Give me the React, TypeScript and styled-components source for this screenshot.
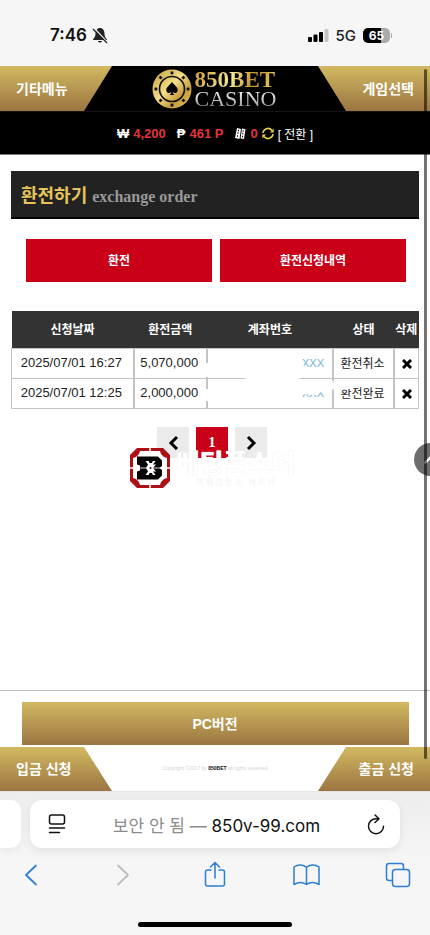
import React from "react";
import styled, { createGlobalStyle } from "styled-components";

const gold = "linear-gradient(#d2b961, #9b7541)";
const korean = '"Liberation Sans", "Noto Sans CJK KR", sans-serif';
const system = 'Inter, "Noto Sans CJK KR", sans-serif';

const Global = createGlobalStyle`
  *, *::before, *::after { box-sizing: border-box; }
  body { margin: 0; background: #fff; font-family: ${korean}; }
  button { font: inherit; border: 0; padding: 0; background: none; cursor: pointer; }
  a { text-decoration: none; color: inherit; }
  svg { display: block; flex: none; }
`;

const Screen = styled.div`
  position: relative;
  display: flex;
  flex-direction: column;
  min-height: 100vh;
  overflow: hidden;
`;

const StatusBar = styled.header`
  display: flex;
  align-items: center;
  justify-content: space-between;
  height: 66px;
  padding: 4px 38px 0 50px;
  background: #f6f6f6;
  font-family: ${system};
`;

const StatusGroup = styled.div<{ $gap: number }>`
  display: flex;
  align-items: center;
  gap: ${(p) => p.$gap}px;
`;

const Clock = styled.time`
  font-size: 17px;
  font-weight: 600;
  color: #111;
`;

const Network = styled.span`
  font-size: 15px;
  font-weight: 500;
  color: #222;
`;

const BatteryGroup = styled.span`
  display: flex;
  align-items: center;
  gap: 1px;
`;

const Battery = styled.span`
  width: 27px;
  height: 15px;
  border-radius: 5px;
  background: linear-gradient(90deg, #000 66%, #aaa 66%);
  color: #fff;
  font-size: 12px;
  font-weight: 700;
  line-height: 15px;
  text-align: center;
`;

const BatteryTip = styled.span`
  width: 1px;
  height: 5px;
  background: #aaa;
`;

const SiteHeader = styled.div`
  display: flex;
  justify-content: space-between;
  height: 46px;
  background: #000;
  border-bottom: 1px solid #151515;
`;

const corners = {
  topLeft: "polygon(0 0, 100% 0, 75% 100%, 0 100%)",
  topRight: "polygon(0 0, 100% 0, 100% 100%, 25% 100%)",
  bottomLeft: "polygon(0 0, 75% 0, 100% 100%, 0 100%)",
  bottomRight: "polygon(25% 0, 100% 0, 100% 100%, 0 100%)",
};

const CornerButton = styled.button<{ $corner: keyof typeof corners }>`
  width: 112px;
  padding: 0 16px 2px;
  background: ${gold};
  clip-path: ${(p) => corners[p.$corner]};
  color: #fff;
  font-size: 14px;
  font-weight: 700;
  white-space: nowrap;
  text-align: ${(p) => (p.$corner.endsWith("Left") ? "left" : "right")};
`;

const Logo = styled.a`
  display: flex;
  align-items: center;
  gap: 3px;
  padding-right: 2px;
  font-family: "Liberation Serif", serif;
`;

const LogoText = styled.span`
  display: flex;
  flex-direction: column;
`;

const LogoLine = styled.span<{ $silver?: boolean }>`
  font-size: ${(p) => (p.$silver ? 22 : 23)}px;
  font-weight: ${(p) => (p.$silver ? 400 : 700)};
  line-height: 19px;
  background: ${(p) =>
    p.$silver ? "linear-gradient(#fff, #999)" : "linear-gradient(110deg, #c99d38, #f7e891 45%, #c08f2b 70%, #ecd46c)"};
  background-clip: text;
  color: transparent;
`;

const Balances = styled.div`
  display: flex;
  align-items: center;
  justify-content: center;
  height: 43px;
  background: #000;
  border-bottom: 1px solid #777;
  color: #fff;
  font-size: 13px;
  gap: 11px;
`;

const Balance = styled.span`
  display: flex;
  align-items: center;
  gap: 4px;
  font-weight: 700;
  white-space: nowrap;
`;

const Amount = styled.span`
  color: #e5343b;
`;

const Transfer = styled.button`
  color: #fff;
  font-size: 12px;
  font-weight: 400;
`;

const Refresh = styled.button`
  display: flex;
`;

const Main = styled.main`
  flex: 1;
  padding: 16px 11px 0;
`;

const Title = styled.h1`
  display: flex;
  align-items: center;
  gap: 5px;
  height: 48px;
  margin: 0;
  padding: 0 10px;
  background: #222;
  border-bottom: 2px solid #000;
  color: #e5c45c;
  font-size: 18px;
  font-weight: 700;
`;

const Subtitle = styled.small`
  padding-top: 5px;
  color: #999;
  font-family: "Liberation Serif", serif;
  font-size: 16px;
`;

const Tabs = styled.nav`
  display: grid;
  grid-template-columns: 1fr 1fr;
  gap: 8px;
  margin: 20px 13px 29px 15px;
`;

const Tab = styled.button`
  height: 43px;
  padding-bottom: 2px;
  background: #ca0019;
  color: #fff;
  font-size: 12px;
  font-weight: 700;
`;

const TableArea = styled.div`
  position: relative;
`;

const Table = styled.table`
  width: 100%;
  table-layout: fixed;
  border-collapse: collapse;
  color: #222;
  font-size: 12px;
`;

const Column = styled.col<{ $share: number }>`
  width: ${(p) => p.$share}%;
`;

const Th = styled.th`
  height: 37px;
  padding: 0 0 2px;
  background: #333;
  color: #fff;
  font-weight: 700;
  white-space: nowrap;
`;

const Td = styled.td<{ $masked?: boolean; $figures?: boolean }>`
  height: 30px;
  padding: ${(p) => (p.$masked ? "0 8px 0 0" : "0 2px 1px 0")};
  border: 1px solid #c4c4c4;
  border-width: 1px 2px;
  text-align: ${(p) => (p.$masked ? "right" : "center")};
  color: ${(p) => (p.$masked ? "#6fb4d8" : "inherit")};
  font-size: ${(p) => (p.$figures ? 13 : p.$masked ? 11 : 12)}px;
  white-space: nowrap;
  &:first-child { border-left-width: 1px; }
  &:last-child { border-right-width: 1px; padding-right: 0; }
`;

const Delete = styled.button`
  display: block;
  margin: 2px auto 0;
`;

const Brush = styled.svg`
  position: absolute;
  left: 46%;
  bottom: 0;
  width: 42%;
  height: 61px;
  pointer-events: none;
`;

const Pager = styled.nav`
  position: relative;
  display: flex;
  justify-content: center;
  gap: 7px;
  margin: 18px 6px 0 0;
`;

const PageLink = styled.a<{ $current?: boolean }>`
  display: flex;
  align-items: center;
  justify-content: center;
  width: 32px;
  height: 31px;
  background: ${(p) => (p.$current ? "#ca0019" : "#ebebeb")};
  color: #fff;
  font-family: "Liberation Serif", serif;
  font-size: 15px;
  font-weight: 700;
  line-height: 16px;
`;

const Watermark = styled.div`
  position: absolute;
  top: 20px;
  left: 0;
  right: 0;
  display: flex;
  align-items: center;
  justify-content: center;
  gap: 5px;
  color: #fff;
  white-space: nowrap;
  pointer-events: none;
`;

const WatermarkText = styled.div`
  display: flex;
  flex-direction: column;
  align-items: center;
  padding-top: 4px;
`;

const WatermarkName = styled.strong`
  font-size: 26px;
  font-weight: 900;
  line-height: 26px;
  text-shadow: 0 0 1px #e4e4e4;
`;

const WatermarkNote = styled.span`
  font-size: 8px;
  line-height: 12px;
  text-shadow: 0 0 1px #ddd;
`;

const Footer = styled.footer`
  border-top: 1px solid #bbb;
  padding-top: 11px;
`;

const PcButton = styled.button`
  display: block;
  width: calc(100% - 43px);
  height: 43px;
  margin: 0 auto 2px;
  padding-bottom: 2px;
  background: ${gold};
  color: #fff;
  font-size: 14px;
  font-weight: 700;
`;

const FooterBar = styled.div`
  display: flex;
  align-items: stretch;
  justify-content: space-between;
  height: 44px;
`;

const Copyright = styled.p`
  align-self: center;
  margin: 0 0 3px;
  color: #d4d4d4;
  font-size: 5px;
  white-space: nowrap;
`;

const Brand = styled.strong`
  color: #111;
`;

const Browser = styled.section`
  height: 144px;
  padding-top: 8px;
  border-top: 1px solid #e4e4e4;
  background: linear-gradient(#ededed, #f6f6f6 50%);
  font-family: ${system};
`;

const AddressRow = styled.div`
  display: flex;
  gap: 9px;
  padding-right: 30px;
`;

const NextTab = styled.div`
  width: 21px;
  border-radius: 0 10px 10px 0;
  background: #fff;
  box-shadow: 0 3px 8px #0000000d;
`;

const Address = styled.div`
  flex: 1;
  display: flex;
  align-items: center;
  justify-content: space-between;
  height: 48px;
  padding: 0 15px 0 18px;
  border-radius: 12px;
  background: #fff;
  box-shadow: 0 3px 10px #00000014;
`;

const Url = styled.span`
  color: #8c8c8c;
  font-size: 17px;
  white-space: nowrap;
`;

const Host = styled.span`
  color: #111;
`;

const IconButton = styled.button`
  display: flex;
`;

const Toolbar = styled.nav`
  display: flex;
  justify-content: space-between;
  height: 53px;
  padding: 0 17px 0 16px;
`;

const ToolButton = styled.button`
  display: flex;
  align-items: center;
  justify-content: center;
  width: 30px;
`;

const HomeBar = styled.div`
  width: 154px;
  height: 5px;
  margin: 21px auto 0;
  border-radius: 3px;
  background: #000;
`;

const ScrollThumb = styled.div`
  position: absolute;
  top: 69px;
  right: 3px;
  bottom: 176px;
  width: 3px;
  border-radius: 2px;
  background: #0000008c;
`;

const TopButton = styled.button`
  position: absolute;
  top: 443px;
  right: -17px;
  display: flex;
  align-items: center;
  justify-content: center;
  width: 33px;
  height: 33px;
  border-radius: 50%;
  background: #555d;
`;

function Chip() {
  return (
    <svg width="40" height="40" viewBox="0 0 40 40" aria-hidden="true">
      <defs>
        <linearGradient id="chip" x1="0" y1="0" x2="1" y2="1">
          <stop offset="0" stopColor="#c49a3a" />
          <stop offset=".45" stopColor="#f3df87" />
          <stop offset=".7" stopColor="#c79c3b" />
          <stop offset="1" stopColor="#e6c861" />
        </linearGradient>
      </defs>
      <circle cx="20" cy="20" r="19.5" fill="url(#chip)" />
      {[0, 45, 90, 135, 180, 225, 270, 315].map((a) => (
        <rect key={a} x="18.6" y="2.5" width="2.8" height="2.8" fill="#111" transform={`rotate(${a} 20 20)`} />
      ))}
      <circle cx="20" cy="20" r="12.5" fill="none" stroke="#111" strokeWidth="1.6" />
      <path d="M20 13c-2 3-5.800 4.800-5.800 8.100 0 3 3.400 3.800 5.100 1.700-.2 1.800-.9 2.600-1.900 3.200h5.200c-1-.6-1.700-1.400-1.900-3.200 1.700 2.100 5.100 1.300 5.100-1.700C25.800 17.800 22 16 20 13z" fill="#080808" />
    </svg>
  );
}

function Badge() {
  return (
    <svg width="42" height="42" viewBox="0 0 42 42" aria-hidden="true">
      <path d="M8 1h26l7 7v26l-7 7H8l-7-7V8z" fill="#ad1117" />
      <path d="M11 4h20l1 3 3 3 3 1v20l-3 1-3 3-1 3H11l-1-3-3-3-3-1V11l3-1 3-3z" fill="#fff" />
      <path d="M21 0v8M21 34v8M0 21h6M36 21h6" stroke="#fff" strokeWidth="1.5" />
      <path d="M8 9.500h21l4 4V19l-2.500 2 2.500 2v5.500l-4 4H8V24.500l3-1v-5l-3-1z" fill="#050505" />
      <path d="M16.500 14h10l-2.500 3.500h3l-3 3.500 3 3.500h-3l2.500 3.500h-10l2.500-3.500-2-3.500 2-3.500z" fill="#fff" />
      <path d="M19.500 13.500h4.500l-1 2.500h-2.500zM19.500 28.500h4.500l-1-2.500h-2.500z" fill="#050505" />
      <path d="M5 21h32" stroke="#fff" strokeWidth=".8" />
      <circle cx="21.500" cy="21" r="1" fill="#500" />
    </svg>
  );
}

function Chevron({ left, color }: { left?: boolean; color: string }) {
  return (
    <svg width="24" height="24" viewBox="0 0 24 24" fill="none" stroke={color} strokeWidth="1.800" aria-hidden="true">
      <path d={left ? "M17 2.500L7 12l10 9.500" : "M7 2.500L17 12 7 21.500"} strokeLinecap="round" strokeLinejoin="round" />
    </svg>
  );
}

function PageArrow({ left }: { left?: boolean }) {
  return (
    <svg width="14" height="16" viewBox="0 0 14 16" fill="none" stroke="#000" strokeWidth="3" aria-hidden="true">
      <path d={left ? "M11 3L5 9l6 6" : "M4 3l6 6-6 6"} />
    </svg>
  );
}

const rows = [
  { date: "2025/07/01 16:27", amount: "5,070,000", state: "환전취소" },
  { date: "2025/07/01 12:25", amount: "2,000,000", state: "환전완료" },
];

export default function App() {
  return (
    <Screen>
      <Global />
      <StatusBar>
        <StatusGroup $gap={5}>
          <Clock>7:46</Clock>
          <svg width="16" height="17" viewBox="0 0 16 17" aria-label="무음">
            <path d="M8 1C5 1 3.500 3.500 3.500 6.500 3.500 10 2 11 1 12.500V13h14v-.5c-1-1.500-2.500-2.500-2.500-6C12.500 3.500 11 1 8 1zM6 14h4c-.4 2-3.600 2-4 0z" fill="#222" />
            <path d="M2 1l13 14" stroke="#f6f6f6" strokeWidth="1.500" />
            <path d="M1 2l14 14" stroke="#222" strokeWidth="1.300" />
          </svg>
        </StatusGroup>
        <StatusGroup $gap={7}>
          <svg width="21" height="14" viewBox="0 0 21 14" aria-label="신호">
            <rect x="0" y="9" width="4" height="5" rx="1" />
            <rect x="5.500" y="6.500" width="4" height="7.500" rx="1" />
            <rect x="11" y="4" width="4" height="10" rx="1" />
            <rect x="16.500" y="1" width="4" height="13" rx="1" fill="#c4c4c4" />
          </svg>
          <Network>5G</Network>
          <BatteryGroup>
            <Battery>65</Battery>
            <BatteryTip />
          </BatteryGroup>
        </StatusGroup>
      </StatusBar>

      <SiteHeader>
        <CornerButton $corner="topLeft">기타메뉴</CornerButton>
        <Logo href="#home">
          <Chip />
          <LogoText>
            <LogoLine>850BET</LogoLine>
            <LogoLine $silver>CASINO</LogoLine>
          </LogoText>
        </Logo>
        <CornerButton $corner="topRight">게임선택</CornerButton>
      </SiteHeader>

      <Balances>
        <Balance>₩ <Amount>4,200</Amount></Balance>
        <Balance>₱ <Amount>461 P</Amount></Balance>
        <Balance>
          <svg width="12" height="13" viewBox="0 0 12 13" aria-label="칩">
            <path d="M3 1l4 1-1.500 10-4.500-1zM8 1.500l3.500.8L10 12l-3.500-.5z" fill="#fff" />
            <path d="M4 3.500h1M3.500 6h1M3 9h1M8.700 4h1M8.300 6.500h1M8 9.500h1" stroke="#000" strokeWidth="1.300" />
          </svg>
          <Amount>0</Amount>
          <Refresh aria-label="새로고침">
            <svg width="12" height="13" viewBox="0 0 12 13" fill="none" stroke="#e8d04a" strokeWidth="1.600">
              <path d="M1 6a5 5 0 0 1 9-2.500M11 7a5 5 0 0 1-9 2.500" />
              <path d="M11.700 1.500v4H8zM.3 11.500v-4H4z" fill="#e8d04a" stroke="none" />
            </svg>
          </Refresh>
          <Transfer>[ 전환 ]</Transfer>
        </Balance>
      </Balances>

      <Main>
        <Title>환전하기 <Subtitle>exchange order</Subtitle></Title>
        <Tabs>
          <Tab>환전</Tab>
          <Tab>환전신청내역</Tab>
        </Tabs>
        <TableArea>
          <Table>
            <colgroup>
              {[30, 18, 31, 15, 6].map((s, i) => <Column key={i} $share={s} />)}
            </colgroup>
            <thead>
              <tr>
                {["신청날짜", "환전금액", "계좌번호", "상태", "삭제"].map((h) => <Th key={h} scope="col">{h}</Th>)}
              </tr>
            </thead>
            <tbody>
              {rows.map((r) => (
                <tr key={r.date}>
                  <Td $figures>{r.date}</Td>
                  <Td $figures>{r.amount}</Td>
                  <Td $masked>XXX</Td>
                  <Td>{r.state}</Td>
                  <Td>
                    <Delete aria-label="삭제">
                      <svg width="10" height="10" viewBox="0 0 10 10" stroke="#000" strokeWidth="3">
                        <path d="M1 1l8 8M9 1L1 9" />
                      </svg>
                    </Delete>
                  </Td>
                </tr>
              ))}
            </tbody>
          </Table>
          <Brush viewBox="0 0 171 61" preserveAspectRatio="none" fill="#fff" aria-hidden="true">
            <path d="M3 15H104l4 12-8 2v4h34v2h20v6h-18l-12 2-7 4-16-1v7H3V41h40v-9H51l-9-3H3z" />
          </Brush>
        </TableArea>
        <Pager aria-label="페이지">
          <PageLink href="#prev" aria-label="이전"><PageArrow left /></PageLink>
          <PageLink href="#1" $current>1</PageLink>
          <PageLink href="#next" aria-label="다음"><PageArrow /></PageLink>
          <Watermark>
            <Badge />
            <WatermarkText>
              <WatermarkName>베팅플스터</WatermarkName>
              <WatermarkNote>먹 튀 검 증 소 &nbsp; 파 트 너</WatermarkNote>
            </WatermarkText>
          </Watermark>
        </Pager>
      </Main>

      <Footer>
        <PcButton>PC버전</PcButton>
        <FooterBar>
          <CornerButton $corner="bottomLeft">입금 신청</CornerButton>
          <Copyright>Copyright ©2017 by <Brand>850BET</Brand> all rights reserved</Copyright>
          <CornerButton $corner="bottomRight">출금 신청</CornerButton>
        </FooterBar>
      </Footer>

      <Browser>
        <AddressRow>
          <NextTab />
          <Address>
            <IconButton aria-label="페이지 메뉴">
              <svg width="18" height="20" viewBox="0 0 18 20" fill="none" stroke="#111" strokeWidth="1.500" strokeLinecap="round">
                <rect x="1.500" y="1" width="15" height="9" rx="2" />
                <path d="M1.500 14h15M1.500 18.500h10" />
              </svg>
            </IconButton>
            <Url>보안 안 됨 — <Host>850v-99.com</Host></Url>
            <IconButton aria-label="새로고침">
              <svg width="18" height="21" viewBox="0 0 18 21" fill="none" stroke="#111" strokeWidth="1.500" strokeLinecap="round" strokeLinejoin="round">
                <path d="M10.500 4.700H9a7.500 7.500 0 1 0 7.500 7.500M8 1l4 3.700-4 3.800" />
              </svg>
            </IconButton>
          </Address>
        </AddressRow>
        <Toolbar>
          <ToolButton aria-label="뒤로"><Chevron left color="#2f7ed0" /></ToolButton>
          <ToolButton aria-label="앞으로"><Chevron color="#bdbdbd" /></ToolButton>
          <ToolButton aria-label="공유">
            <svg width="22" height="27" viewBox="0 0 22 27" fill="none" stroke="#2f7ed0" strokeWidth="1.500" strokeLinecap="round" strokeLinejoin="round">
              <path d="M7 9H3.500Q1.500 9 1.500 11v12q0 2 2 2h15q2 0 2-2V11q0-2-2-2H15M11 17V1.500M6.500 6L11 1.500 15.500 6" />
            </svg>
          </ToolButton>
          <ToolButton aria-label="책갈피">
            <svg width="27" height="24" viewBox="0 0 27 24" fill="none" stroke="#2f7ed0" strokeWidth="1.500" strokeLinejoin="round">
              <path d="M13.500 4.500C11 1.500 5 1 1 4v17.500c4-2.500 9-2.500 12.500 0 3.500-2.500 8.500-2.500 12.500 0V4c-4-3-10-2.500-12.500.5zM13.500 4.500v17" />
            </svg>
          </ToolButton>
          <ToolButton aria-label="탭">
            <svg width="26" height="26" viewBox="0 0 26 26" fill="none" stroke="#2f7ed0" strokeWidth="1.500" strokeLinejoin="round">
              <rect x="7.500" y="7.500" width="17" height="17" rx="3" />
              <path d="M7.500 18.500H4q-2.500 0-2.500-2.500V4Q1.500 1.500 4 1.500h12q2.500 0 2.500 2.500v3.500" />
            </svg>
          </ToolButton>
        </Toolbar>
        <HomeBar />
      </Browser>
      <TopButton aria-label="맨 위로">
        <svg width="14" height="9" viewBox="0 0 14 9" fill="none" stroke="#fff" strokeWidth="2.500" strokeLinecap="round">
          <path d="M1.500 7.500L7 2l5.500 5.500" />
        </svg>
      </TopButton>
      <ScrollThumb />
    </Screen>
  );
}
